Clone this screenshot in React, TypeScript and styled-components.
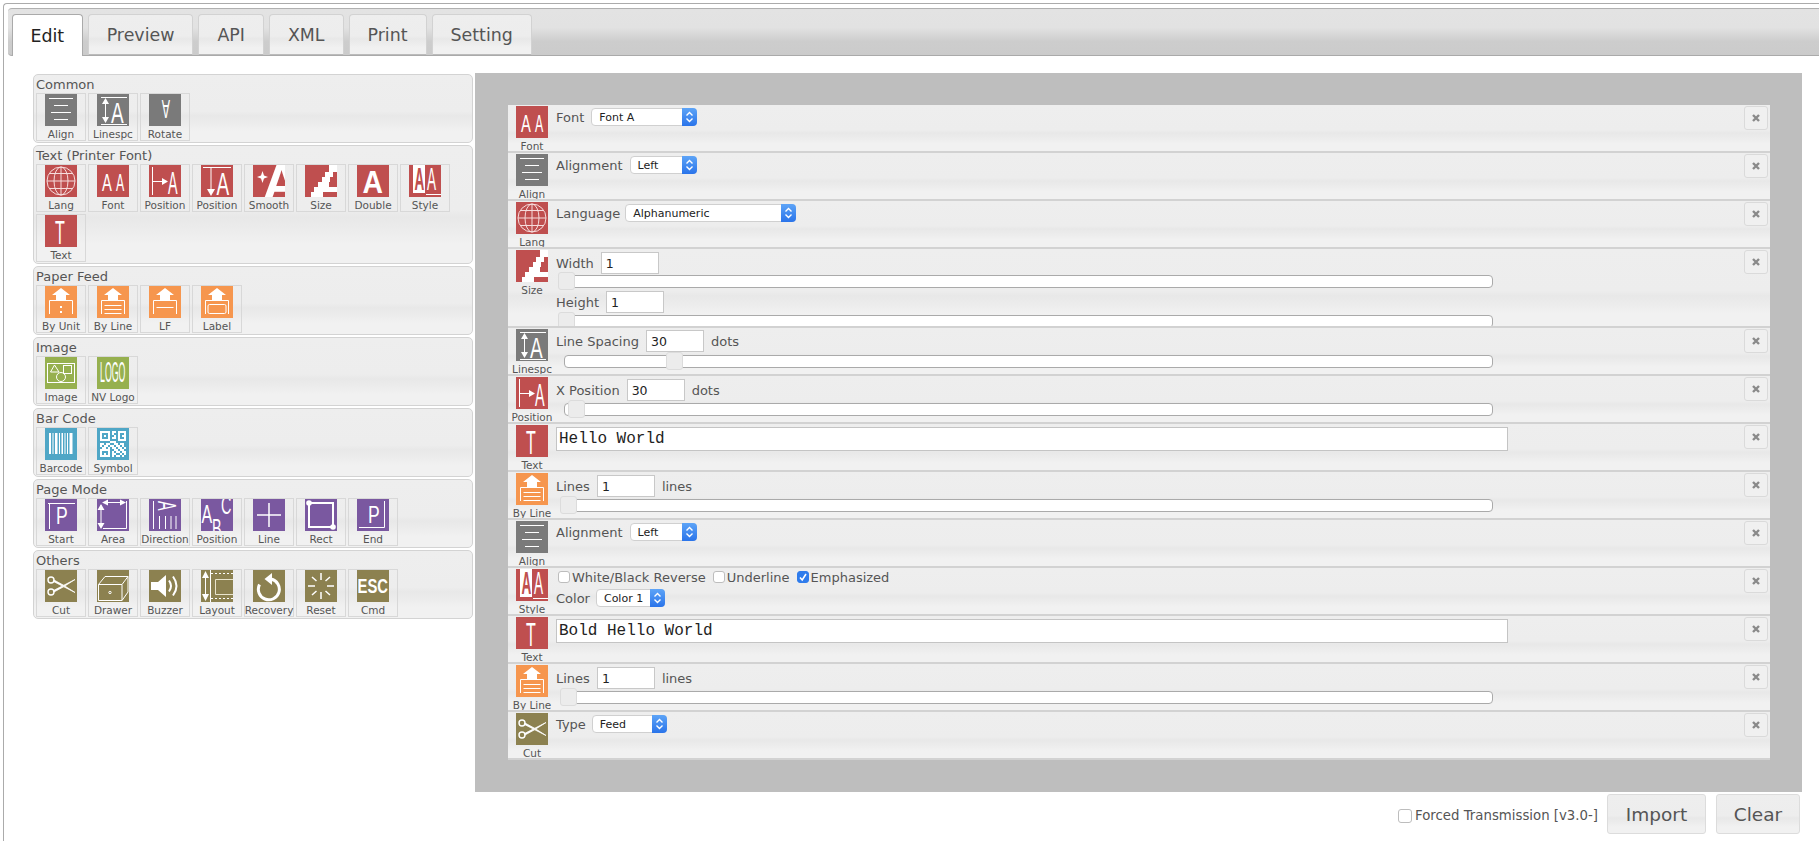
import React from "react";
import styled, { createGlobalStyle } from "styled-components";

const UI_FONT = `"DejaVu Sans", Verdana, sans-serif`;
const STREAK = `linear-gradient(#eeeeee 0, #ededed 54%, #e8e8e8 61%, #ececec 72%, #f1f1f1 84%, #f1f1f1 100%)`;

const TONES = {
  gray: "#7a7a7a",
  red: "#bf4f4f",
  orange: "#f6964e",
  green: "#96b04f",
  blue: "#4fa6c6",
  purple: "#7a58a0",
  olive: "#8c8150",
};
type Tone = keyof typeof TONES;

const GlobalStyle = createGlobalStyle`
  html, body {
    margin: 0;
    padding: 0;
    background: #fff;
    overflow: hidden;
  }
  body {
    font-family: ${UI_FONT};
    color: #555;
  }
  * { box-sizing: border-box; }
`;

/* ---------- icon parts ---------- */

const Glyph: React.FC<{
  x: number;
  y: number;
  sx?: number;
  sy?: number;
  size?: number;
  rot?: number;
  bold?: boolean;
  fill?: string;
  children: string;
}> = ({ x, y, sx = 0.74, sy = 1.22, size = 20, rot = 0, bold, fill = "#fff", children }) => (
  <text
    transform={`translate(${x} ${y}) rotate(${rot}) scale(${sx} ${sy})`}
    fontFamily="Liberation Sans, sans-serif"
    fontSize={size}
    fontWeight={bold ? 700 : 400}
    fill={fill}
    stroke="none"
  >
    {children}
  </text>
);

const FeedFrame = () => (
  <>
    <path d="M4.5 28V14.5H27.5V28" fill="none" stroke="#fff" strokeWidth="1" />
    <path d="M16 2L25 9H21V15H11V9H7Z" fill="#fff" />
  </>
);

const QR_ROWS = [
  "1111101101111",
  "1000101001001",
  "1010100101011",
  "1000101101001",
  "1111100001111",
  "0000011100000",
  "1101100110110",
  "1011011011010",
  "0110101101101",
  "1111100110110",
  "1000101011011",
  "1010101100101",
  "1111101011010",
];

const ICONS: Record<string, React.ReactNode> = {
  align: (
    <g stroke="#fff" strokeWidth="1">
      <path d="M4 4.5H28M9 11.5H23M6 18.5H26M9 25.5H23" />
    </g>
  ),
  linespc: (
    <g stroke="#fff" strokeWidth="1" fill="#fff">
      <path d="M4 3.5H30M4 30.5H30M8.5 5V28" />
      <path d="M8.5 4L12 10H5ZM8.5 29L12 23H5Z" stroke="none" />
      <Glyph x={14} y={29} sx={0.95} sy={1.45}>A</Glyph>
    </g>
  ),
  rotate: <Glyph x={21} y={6} sx={0.62} sy={1.3} rot={180}>A</Glyph>,
  lang: (
    <g fill="none" stroke="#f6dcdc" strokeWidth="1">
      <circle cx="16" cy="16" r="14" />
      <ellipse cx="16" cy="16" rx="7" ry="14" />
      <path d="M16 2V30M2 16H30M4.5 8.5H27.5M4.5 23.5H27.5" />
    </g>
  ),
  font: (
    <>
      <Glyph x={5} y={26}>A</Glyph>
      <Glyph x={19} y={26} sx={0.62}>A</Glyph>
    </>
  ),
  posx: (
    <g stroke="#fff" strokeWidth="1" fill="#fff">
      <path d="M3.5 2V30M3.5 16.5H15" />
      <path d="M19 16.5L13 13V20Z" stroke="none" />
      <Glyph x={19} y={29} sx={0.72} sy={1.55}>A</Glyph>
    </g>
  ),
  posy: (
    <g stroke="#fff" strokeWidth="1" fill="#fff">
      <path d="M2 2.5H30M10 3V26" />
      <path d="M10 31L6 24H14Z" stroke="none" />
      <Glyph x={15.5} y={30} sx={0.95} sy={1.6}>A</Glyph>
    </g>
  ),
  smooth: (
    <>
      <path d="M9.5 6L11 10.5L15 12L11 13.5L9.5 18L8 13.5L4 12L8 10.5Z" fill="#fff" />
      <Glyph x={9} y={36} sx={1} sy={1} size={54} bold>A</Glyph>
    </>
  ),
  size: (
    <g fill="#fff">
      <rect x="24" y="0" width="8" height="7" />
      <rect x="20" y="7" width="8" height="5" />
      <rect x="17" y="12" width="8" height="5" />
      <rect x="13" y="17" width="11" height="5" />
      <rect x="9" y="22" width="23" height="5" />
      <rect x="6" y="27" width="12" height="5" />
    </g>
  ),
  double: <Glyph x={5.5} y={28} sx={1.35} sy={1.45} size={21} bold>A</Glyph>,
  style: (
    <>
      <rect x="4" y="0" width="12" height="28" fill="#fff" />
      <Glyph x={5.5} y={25} sx={0.68} sy={1.55} fill="#bf4f4f" bold>A</Glyph>
      <Glyph x={18} y={25} sx={0.68} sy={1.55}>A</Glyph>
      <path d="M17 29.5H32" stroke="#fff" strokeWidth="1" />
    </>
  ),
  text: <Glyph x={10} y={29} sx={0.8} sy={1.7}>T</Glyph>,
  byunit: (
    <>
      <FeedFrame />
      <path d="M15 20h2v2h-2zM15 25h2v2h-2z" fill="#fff" />
    </>
  ),
  byline: (
    <>
      <FeedFrame />
      <path d="M7.5 19.5H24.5M7.5 23.5H24.5M7.5 27.5H24.5" stroke="#fff" strokeWidth="1" />
    </>
  ),
  lf: (
    <>
      <FeedFrame />
      <path d="M7.5 21.5H24.5" stroke="#fff" strokeWidth="1" />
    </>
  ),
  label: (
    <>
      <FeedFrame />
      <rect x="7" y="18.5" width="18" height="9" rx="1.5" fill="none" stroke="#fff" strokeWidth="1" />
    </>
  ),
  image: (
    <g fill="none" stroke="#fff" strokeWidth="1">
      <rect x="2.5" y="6.5" width="27" height="19" />
      <path d="M9.5 8L14 15H5.5Z" />
      <rect x="18.5" y="8.5" width="8" height="8" />
      <circle cx="16" cy="20" r="4.5" />
    </g>
  ),
  logo: <Glyph x={3} y={25} sx={0.44} sy={1.45}>LOGO</Glyph>,
  barcode: (
    <path
      d="M4 5h2v21H4zM7.5 5h1v21h-1zM10 5h2.5v21H10zM14 5h1v21h-1zM16.5 5h1.5v21h-1.5zM19.5 5h1v21h-1zM22 5h1v21h-1zM24.5 5h3v21h-3z"
      fill="#fff"
    />
  ),
  symbol: (
    <g fill="#fff">
      {QR_ROWS.map((row, y) =>
        row.split("").map((cell, x) =>
          cell === "1" ? <rect key={`${x}-${y}`} x={3 + x * 2} y={3 + y * 2} width="2" height="2" /> : null
        )
      )}
    </g>
  ),
  start: (
    <>
      <path d="M3 4.5H30M4.5 4.5V30" fill="none" stroke="#fff" strokeWidth="1" />
      <Glyph x={11} y={25} sx={0.88} sy={1.2}>P</Glyph>
    </>
  ),
  area: (
    <g stroke="#fff" strokeWidth="1" fill="#fff">
      <path d="M7 3.5H27M4 6V27M29.5 2V29.5H6" fill="none" />
      <path d="M5 3.5L11 0.5V6.5ZM29 3.5L23 0.5V6.5ZM4 5L0.5 11H7.5ZM4 30L0.5 24H7.5Z" stroke="none" />
    </g>
  ),
  direction: (
    <>
      <path d="M4.5 2V30M10.5 17V30M16.5 17V30M22 17V30M27 17V30" stroke="#fff" strokeWidth="1" />
      <Glyph x={9} y={2} sx={0.9} sy={1.6} size={16} rot={90}>A</Glyph>
    </>
  ),
  pagepos: (
    <>
      <Glyph x={0.5} y={24} sx={0.8} sy={1.3}>A</Glyph>
      <Glyph x={20} y={15} sx={0.72} sy={1.3}>C</Glyph>
      <Glyph x={11} y={38} sx={0.72} sy={1.3}>B</Glyph>
    </>
  ),
  line: <path d="M4 16H28M16 4V28" stroke="#fff" strokeWidth="1.5" />,
  rect: (
    <>
      <rect x="4" y="4" width="24" height="24" fill="none" stroke="#fff" strokeWidth="2" />
      <circle cx="4" cy="4" r="2.8" fill="#fff" />
      <circle cx="28" cy="28" r="2.8" fill="#fff" />
    </>
  ),
  end: (
    <>
      <path d="M27.5 2V28.5H2" fill="none" stroke="#fff" strokeWidth="1" />
      <Glyph x={11} y={24} sx={0.88} sy={1.2}>P</Glyph>
    </>
  ),
  cut: (
    <g>
      <circle cx="6" cy="10" r="3" fill="none" stroke="#fff" strokeWidth="1.4" />
      <circle cx="6" cy="22" r="3" fill="none" stroke="#fff" strokeWidth="1.4" />
      <path d="M8.5 11.5L30 22.5L19 15.5L9 10ZM8.5 20.5L30 9.5L19 16.5L9 22Z" fill="#fff" stroke="#fff" strokeWidth="0.8" />
    </g>
  ),
  drawer: (
    <g fill="none" stroke="#fff" strokeWidth="1">
      <path d="M1.5 14.5L8 6.5H31L25 14.5H1.5V30.5H25V14.5M25 30.5L31 22V6.5" />
      <circle cx="13" cy="22.5" r="1.2" />
    </g>
  ),
  buzzer: (
    <g>
      <path d="M2 12H9L17 5V27L9 20H2Z" fill="#fff" />
      <path d="M20 10.5Q24 16 20 21.5M24 6.5Q31 16 24 25.5" fill="none" stroke="#fff" strokeWidth="2" />
    </g>
  ),
  layout: (
    <g stroke="#fff" strokeWidth="1" fill="#fff">
      <path d="M4.5 5V27M9.5 0V32" />
      <path d="M4.5 1L8 8H1ZM4.5 31L8 24H1Z" stroke="none" />
      <path d="M10 3.5H32M10 28.5H32" strokeDasharray="2 2" />
      <path d="M32 9.5H14.5V24.5H32" fill="none" stroke="#e9e4cc" />
    </g>
  ),
  recovery: (
    <g>
      <path d="M6.5 14.5A10.5 10.5 0 1 0 18 9" fill="none" stroke="#fff" strokeWidth="3" />
      <path d="M19 3V15L11.5 9Z" fill="#fff" />
    </g>
  ),
  reset: (
    <path
      d="M16 3V10M16 22V29M3 16H10M22 16H29M7 7L11.5 11M25 7L20.5 11M7 25L11.5 21M25 25L20.5 21"
      stroke="#fff"
      strokeWidth="1.5"
    />
  ),
  cmd: <Glyph x={0.5} y={23} sx={0.78} sy={1.1} size={19} bold>ESC</Glyph>,
};

/* ---------- page frame ---------- */

const Shell = styled.div`
  margin: 3px 0 0 3px;
  padding: 4px 0 0 4px;
  height: 838px;
  border-top: 1px solid #ababab;
  border-left: 1px solid #ababab;
  border-top-left-radius: 4px;
`;

const TabBar = styled.div`
  height: 48px;
  padding: 5px 0 0 4px;
  display: flex;
  gap: 5px;
  align-items: flex-end;
  border-top: 1px solid #b0b0b0;
  border-bottom: 1px solid #aaa;
  border-radius: 4px 0 0 4px;
  background: linear-gradient(#e3e3e3 0, #e2e2e2 40%, #d6d6d6 58%, #cdcdcd 70%, #cbcbcb 100%);
`;

const Tab = styled.div<{ $active?: boolean }>`
  height: ${(p) => (p.$active ? 42 : 41)}px;
  margin-bottom: ${(p) => (p.$active ? -1 : 0)}px;
  padding: 0 ${(p) => (p.$active ? 17.5 : 18)}px;
  display: flex;
  align-items: center;
  font-size: 17.4px;
  color: ${(p) => (p.$active ? "#222" : "#555")};
  border: 1px solid ${(p) => (p.$active ? "#aaa" : "#d2d2d2")};
  border-bottom: ${(p) => (p.$active ? "none" : "1px solid #bbb")};
  border-radius: 4px 4px 0 0;
  background: ${(p) => (p.$active ? "#fff" : STREAK)};
`;

const Workspace = styled.div`
  display: flex;
  padding: 17px 0 0 25px;
  gap: 2px;
  align-items: flex-start;
`;

/* ---------- palette on the left ---------- */

const Palette = styled.div`
  width: 440px;
  margin-top: 1px;
  display: flex;
  flex-direction: column;
  gap: 2px;
`;

const Group = styled.section`
  border: 1px solid #d3d3d3;
  border-radius: 5px;
  padding: 0 2px 1px 2px;
  background: ${STREAK};
`;

const GroupTitle = styled.div`
  height: 18px;
  line-height: 19px;
  font-size: 13px;
  color: #555;
`;

const TileWrap = styled.div`
  display: flex;
  flex-wrap: wrap;
  gap: 2px;
`;

const Tile = styled.div`
  width: 50px;
  height: 48px;
  border: 1px solid #d8d8d8;
  display: flex;
  flex-direction: column;
  align-items: center;
  font-size: 10.5px;
  line-height: 17px;
  color: #555;
  white-space: nowrap;
`;

const IconBox = styled.svg<{ $tone: Tone }>`
  display: block;
  flex: none;
  width: 32px;
  height: 32px;
  background: ${(p) => TONES[p.$tone]};
  overflow: hidden;
`;

const Icon: React.FC<{ name: string; tone: Tone }> = ({ name, tone }) => (
  <IconBox viewBox="0 0 32 32" $tone={tone}>
    {ICONS[name]}
  </IconBox>
);

const PALETTE: { title: string; items: [string, string, Tone][] }[] = [
  { title: "Common", items: [["Align", "align", "gray"], ["Linespc", "linespc", "gray"], ["Rotate", "rotate", "gray"]] },
  {
    title: "Text (Printer Font)",
    items: [
      ["Lang", "lang", "red"],
      ["Font", "font", "red"],
      ["Position", "posx", "red"],
      ["Position", "posy", "red"],
      ["Smooth", "smooth", "red"],
      ["Size", "size", "red"],
      ["Double", "double", "red"],
      ["Style", "style", "red"],
      ["Text", "text", "red"],
    ],
  },
  {
    title: "Paper Feed",
    items: [["By Unit", "byunit", "orange"], ["By Line", "byline", "orange"], ["LF", "lf", "orange"], ["Label", "label", "orange"]],
  },
  { title: "Image", items: [["Image", "image", "green"], ["NV Logo", "logo", "green"]] },
  { title: "Bar Code", items: [["Barcode", "barcode", "blue"], ["Symbol", "symbol", "blue"]] },
  {
    title: "Page Mode",
    items: [
      ["Start", "start", "purple"],
      ["Area", "area", "purple"],
      ["Direction", "direction", "purple"],
      ["Position", "pagepos", "purple"],
      ["Line", "line", "purple"],
      ["Rect", "rect", "purple"],
      ["End", "end", "purple"],
    ],
  },
  {
    title: "Others",
    items: [
      ["Cut", "cut", "olive"],
      ["Drawer", "drawer", "olive"],
      ["Buzzer", "buzzer", "olive"],
      ["Layout", "layout", "olive"],
      ["Recovery", "recovery", "olive"],
      ["Reset", "reset", "olive"],
      ["Cmd", "cmd", "olive"],
    ],
  },
];

/* ---------- canvas on the right ---------- */

const RightColumn = styled.div`
  display: flex;
  flex-direction: column;
`;

const Canvas = styled.div`
  width: 1327px;
  height: 719px;
  padding: 32px 32.5px;
  background: #bebebe;
`;

const Panel = styled.div`
  display: flex;
  flex-direction: column;
`;

const Row = styled.div<{ $tall?: boolean }>`
  position: relative;
  height: ${(p) => (p.$tall ? 79 : 48)}px;
  overflow: hidden;
  display: flex;
  gap: 8px;
  padding-left: 8.5px;
  border-bottom: 2px solid #d2d2d2;
  background: ${STREAK};
`;

const RowBadge = styled.div`
  width: 32px;
  flex: none;
  padding-top: 1px;
  display: flex;
  flex-direction: column;
  align-items: center;
  font-size: 10.5px;
  line-height: 17px;
  color: #555;
  white-space: nowrap;
`;

const Fields = styled.div`
  flex: 1;
  min-width: 0;
`;

const FieldLine = styled.div<{ $top?: number }>`
  margin-top: ${(p) => p.$top ?? 3}px;
  display: flex;
  align-items: center;
  gap: 7px;
  min-height: 18px;
  font-size: 13px;
  color: #555;
  white-space: nowrap;
`;

const DeleteButton = styled.div`
  position: absolute;
  top: 1px;
  right: 2px;
  width: 24px;
  height: 24px;
  display: flex;
  align-items: center;
  justify-content: center;
  border: 1px solid #dadada;
  border-radius: 3px;
  background: #f0f0f0;
`;

const NumberBox = styled.input`
  width: 58px;
  height: 22px;
  padding: 0 4px;
  border: 1px solid #c8c8c8;
  background: #fff;
  font-family: ${UI_FONT};
  font-size: 12.5px;
  color: #222;
`;

const TextBox = styled.input`
  display: block;
  width: 952px;
  height: 24px;
  margin-top: 3px;
  padding: 0 2px 1px;
  border: 1px solid #c4c4c4;
  background: #fff;
  font-family: "Liberation Mono", monospace;
  font-size: 16px;
  color: #222;
`;

const SelectBox = styled.div<{ $width: number; $nudge?: number }>`
  position: relative;
  width: ${(p) => p.$width}px;
  height: 18px;
  margin-left: ${(p) => p.$nudge ?? 0}px;
  padding-left: 7px;
  line-height: 17px;
  border: 1px solid #d0d0d0;
  border-radius: 4px;
  background: #fff;
  font-size: 11px;
  color: #222;
`;

const SelectCap = styled.span`
  position: absolute;
  top: -1px;
  right: -1px;
  bottom: -1px;
  width: 15px;
  display: flex;
  align-items: center;
  justify-content: center;
  border-radius: 0 4px 4px 0;
  background: linear-gradient(#5da4f7, #2a74ea);
`;

const Select: React.FC<{ width: number; value: string; nudge?: number }> = ({ width, value, nudge }) => (
  <SelectBox $width={width} $nudge={nudge}>
    {value}
    <SelectCap>
      <svg width="9" height="14" viewBox="0 0 9 14" fill="none" stroke="#fff" strokeWidth="1.4">
        <path d="M1.5 5.5L4.5 2.5L7.5 5.5M1.5 8.5L4.5 11.5L7.5 8.5" />
      </svg>
    </SelectCap>
  </SelectBox>
);

const Track = styled.div<{ $top?: number }>`
  position: relative;
  width: 929px;
  height: 13px;
  margin: ${(p) => p.$top ?? 2}px 0 0 8px;
  border: 1px solid #aaa;
  border-radius: 4px;
  background: #fff;
`;

const Handle = styled.span`
  position: absolute;
  top: -4px;
  width: 17px;
  height: 18px;
  border: 1px solid #dcdcdc;
  border-radius: 3px;
  background: #ececec;
`;

const Slider: React.FC<{ at: number; top?: number }> = ({ at, top }) => (
  <Track $top={top}>
    <Handle style={{ left: at - 1 }} />
  </Track>
);

const CheckLabel = styled.span`
  display: inline-flex;
  align-items: center;
  gap: 2px;
`;

const CheckGroup = styled.div`
  display: flex;
  gap: 7px;
  margin-left: 2px;
`;

const CheckBox = styled.span<{ $on?: boolean }>`
  width: 12px;
  height: 12px;
  flex: none;
  display: flex;
  align-items: center;
  justify-content: center;
  border: 1px solid ${(p) => (p.$on ? "#2f7cec" : "#bdbdbd")};
  border-radius: 3px;
  background: ${(p) => (p.$on ? "#2f7cec" : "#fff")};
`;

const Check: React.FC<{ on?: boolean; children: string }> = ({ on, children }) => (
  <CheckLabel>
    <CheckBox $on={on}>
      {on && (
        <svg width="10" height="10" viewBox="0 0 10 10" fill="none" stroke="#fff" strokeWidth="1.6">
          <path d="M2 5.5L4.2 8L8 2" />
        </svg>
      )}
    </CheckBox>
    {children}
  </CheckLabel>
);

const Footer = styled.div`
  display: flex;
  justify-content: flex-end;
  align-items: center;
  height: 40px;
  margin-top: 2px;
  padding-right: 2px;
  font-size: 13.3px;
  color: #555;
`;

const ForcedCheck = styled.div`
  display: flex;
  align-items: center;
  gap: 3px;
  margin-right: 9px;
  margin-top: 3px;

  ${CheckBox} {
    width: 14px;
    height: 14px;
  }
`;

const FooterButton = styled.div<{ $width: number }>`
  width: ${(p) => p.$width}px;
  height: 40px;
  margin-left: ${(p) => (p.$width < 90 ? 10 : 0)}px;
  display: flex;
  align-items: center;
  justify-content: center;
  border: 1px solid #dcdcdc;
  border-radius: 3px;
  background: ${STREAK};
  font-size: 18.5px;
  color: #555;
`;

const Num: React.FC<{ value: string }> = ({ value }) => <NumberBox readOnly value={value} />;

const Step: React.FC<{ label: string; icon: string; tone: Tone; tall?: boolean; children: React.ReactNode }> = ({
  label,
  icon,
  tone,
  tall,
  children,
}) => (
  <Row $tall={tall}>
    <RowBadge>
      <Icon name={icon} tone={tone} />
      {label}
    </RowBadge>
    <Fields>{children}</Fields>
    <DeleteButton>
      <svg width="10" height="10" viewBox="0 0 10 10" stroke="#8a8a8a" strokeWidth="2.4">
        <path d="M2 2L8 8M8 2L2 8" />
      </svg>
    </DeleteButton>
  </Row>
);

const App: React.FC = () => (
  <>
    <GlobalStyle />
    <Shell>
      <TabBar>
        <Tab $active>Edit</Tab>
        <Tab>Preview</Tab>
        <Tab>API</Tab>
        <Tab>XML</Tab>
        <Tab>Print</Tab>
        <Tab>Setting</Tab>
      </TabBar>
      <Workspace>
        <Palette>
          {PALETTE.map((group) => (
            <Group key={group.title}>
              <GroupTitle>{group.title}</GroupTitle>
              <TileWrap>
                {group.items.map(([label, icon, tone]) => (
                  <Tile key={label + icon}>
                    <Icon name={icon} tone={tone} />
                    {label}
                  </Tile>
                ))}
              </TileWrap>
            </Group>
          ))}
        </Palette>
        <RightColumn>
          <Canvas>
            <Panel>
              <Step label="Font" icon="font" tone="red">
                <FieldLine>
                  Font <Select width={106} value="Font A" />
                </FieldLine>
              </Step>
              <Step label="Align" icon="align" tone="gray">
                <FieldLine>
                  Alignment <Select width={67} value="Left" />
                </FieldLine>
              </Step>
              <Step label="Lang" icon="lang" tone="red">
                <FieldLine>
                  Language <Select width={171} value="Alphanumeric" nudge={-2} />
                </FieldLine>
              </Step>
              <Step label="Size" icon="size" tone="red" tall>
                <FieldLine>
                  Width <Num value="1" />
                </FieldLine>
                <Slider at={-6} top={1} />
                <FieldLine $top={3}>
                  Height <Num value="1" />
                </FieldLine>
                <Slider at={-6} top={2} />
              </Step>
              <Step label="Linespc" icon="linespc" tone="gray">
                <FieldLine $top={2}>
                  Line Spacing <Num value="30" /> dots
                </FieldLine>
                <Slider at={102} top={3} />
              </Step>
              <Step label="Position" icon="posx" tone="red">
                <FieldLine>
                  X Position <Num value="30" /> dots
                </FieldLine>
                <Slider at={4} />
              </Step>
              <Step label="Text" icon="text" tone="red">
                <TextBox readOnly value="Hello World" />
              </Step>
              <Step label="By Line" icon="byline" tone="orange">
                <FieldLine>
                  Lines <Num value="1" /> lines
                </FieldLine>
                <Slider at={-4} />
              </Step>
              <Step label="Align" icon="align" tone="gray">
                <FieldLine>
                  Alignment <Select width={67} value="Left" />
                </FieldLine>
              </Step>
              <Step label="Style" icon="style" tone="red">
                <FieldLine $top={0}>
                  <CheckGroup>
                    <Check>White/Black Reverse</Check>
                    <Check>Underline</Check>
                    <Check on>Emphasized</Check>
                  </CheckGroup>
                </FieldLine>
                <FieldLine>
                  Color <Select width={69} value="Color 1" nudge={-1} />
                </FieldLine>
              </Step>
              <Step label="Text" icon="text" tone="red">
                <TextBox readOnly value="Bold Hello World" />
              </Step>
              <Step label="By Line" icon="byline" tone="orange">
                <FieldLine>
                  Lines <Num value="1" /> lines
                </FieldLine>
                <Slider at={-4} />
              </Step>
              <Step label="Cut" icon="cut" tone="olive">
                <FieldLine>
                  Type <Select width={75} value="Feed" nudge={-1} />
                </FieldLine>
              </Step>
            </Panel>
          </Canvas>
          <Footer>
            <ForcedCheck>
              <CheckBox />
              Forced Transmission [v3.0-]
            </ForcedCheck>
            <FooterButton $width={99}>Import</FooterButton>
            <FooterButton $width={84}>Clear</FooterButton>
          </Footer>
        </RightColumn>
      </Workspace>
    </Shell>
  </>
);

export default App;
